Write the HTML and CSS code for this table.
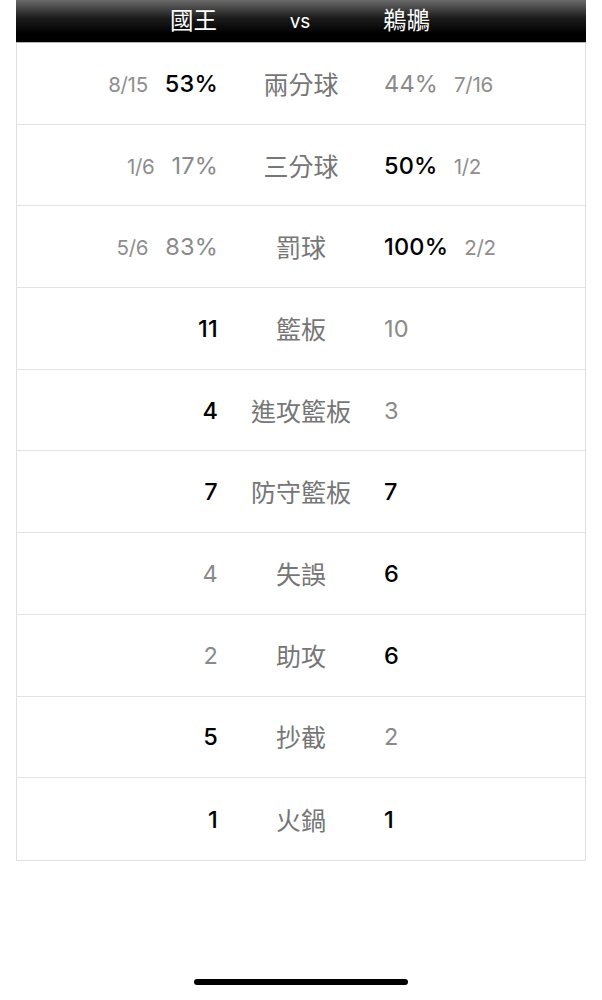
FILE: index.html
```html
<!DOCTYPE html>
<html lang="zh-Hant">
<head>
<meta charset="utf-8">
<link rel="stylesheet" href="styles.css">
</head>
<body>
<div class="page">
  <div class="board">
    <div class="head row-grid">
      <div class="left"><span class="team">國王</span></div>
      <div class="head-mid"><span class="vs">vs</span></div>
      <div class="right"><span class="team">鵜鶘</span></div>
    </div>
    <div class="row row-grid">
      <div class="left"><span class="frac">8/15</span><span class="num win">53%</span></div>
      <div class="mid">兩分球</div>
      <div class="right"><span class="num">44%</span><span class="frac">7/16</span></div>
    </div>
    <div class="row row-grid">
      <div class="left"><span class="frac">1/6</span><span class="num">17%</span></div>
      <div class="mid">三分球</div>
      <div class="right"><span class="num win">50%</span><span class="frac">1/2</span></div>
    </div>
    <div class="row row-grid">
      <div class="left"><span class="frac">5/6</span><span class="num">83%</span></div>
      <div class="mid">罰球</div>
      <div class="right"><span class="num win">100%</span><span class="frac">2/2</span></div>
    </div>
    <div class="row row-grid">
      <div class="left"><span class="num win">11</span></div>
      <div class="mid">籃板</div>
      <div class="right"><span class="num">10</span></div>
    </div>
    <div class="row row-grid">
      <div class="left"><span class="num win">4</span></div>
      <div class="mid">進攻籃板</div>
      <div class="right"><span class="num">3</span></div>
    </div>
    <div class="row row-grid">
      <div class="left"><span class="num win">7</span></div>
      <div class="mid">防守籃板</div>
      <div class="right"><span class="num win">7</span></div>
    </div>
    <div class="row row-grid">
      <div class="left"><span class="num">4</span></div>
      <div class="mid">失誤</div>
      <div class="right"><span class="num win">6</span></div>
    </div>
    <div class="row row-grid">
      <div class="left"><span class="num">2</span></div>
      <div class="mid">助攻</div>
      <div class="right"><span class="num win">6</span></div>
    </div>
    <div class="row row-grid">
      <div class="left"><span class="num win">5</span></div>
      <div class="mid">抄截</div>
      <div class="right"><span class="num">2</span></div>
    </div>
    <div class="row row-grid">
      <div class="left"><span class="num win">1</span></div>
      <div class="mid">火鍋</div>
      <div class="right"><span class="num win">1</span></div>
    </div>
  </div>
  <div class="home-bar"></div>
</div>
</body>
</html>
```
FILE: styles.css
```css
* { box-sizing: border-box; }
html, body { margin: 0; padding: 0; background: #fff; }
body {
  font-family: Inter, "Noto Sans CJK TC", sans-serif;
  width: 602px;
  height: 1000px;
  overflow: hidden;
}
.page {
  position: relative;
  height: 1000px;
  padding: 0 16px;
}
.board {
  border: 1px solid #e0e0e0;
  border-top: none;
}
.row-grid {
  display: grid;
  grid-template-columns: 201px 166px 1fr;
  align-items: center;
}
.head {
  height: 43px;
  background: linear-gradient(to bottom, #6a6a6a 0px, #1c1c1c 18px, #000 34px, #000 100%);
  border-bottom: 1px solid #b5b5b5;
  margin: 0 -1px;
  color: #fff;
}
.head-mid {
  text-align: center;
}
.team {
  font-family: "Noto Sans CJK TC", sans-serif;
  font-size: 23.5px;
  line-height: 1;
  padding-bottom: 2px;
  color: #fff;
}
.vs {
  font-family: Inter, sans-serif;
  font-size: 19px;
  color: #fff;
}
.left {
  display: flex;
  justify-content: flex-end;
  align-items: baseline;
  gap: 17px;
}
.right {
  display: flex;
  justify-content: flex-start;
  align-items: baseline;
  gap: 16px;
}
.mid {
  text-align: center;
  font-family: "Noto Sans CJK TC", sans-serif;
  font-size: 25px;
  color: #767676;
  padding-bottom: 1px;
}
.row {
  height: 81.7px;
  border-bottom: 1px solid #e3e3e3;
}
.row:last-child { border-bottom: none; }
.num {
  font-size: 23.5px;
  color: #8a8a8a;
  letter-spacing: 0.2px;
}
.num.win {
  color: #000;
  font-weight: 500;
}
.frac {
  font-size: 20.5px;
  color: #8e8e8e;
  letter-spacing: -0.3px;
}
.home-bar {
  position: absolute;
  left: 194px;
  top: 979px;
  width: 214px;
  height: 6px;
  border-radius: 3px;
  background: #000;
}
```
